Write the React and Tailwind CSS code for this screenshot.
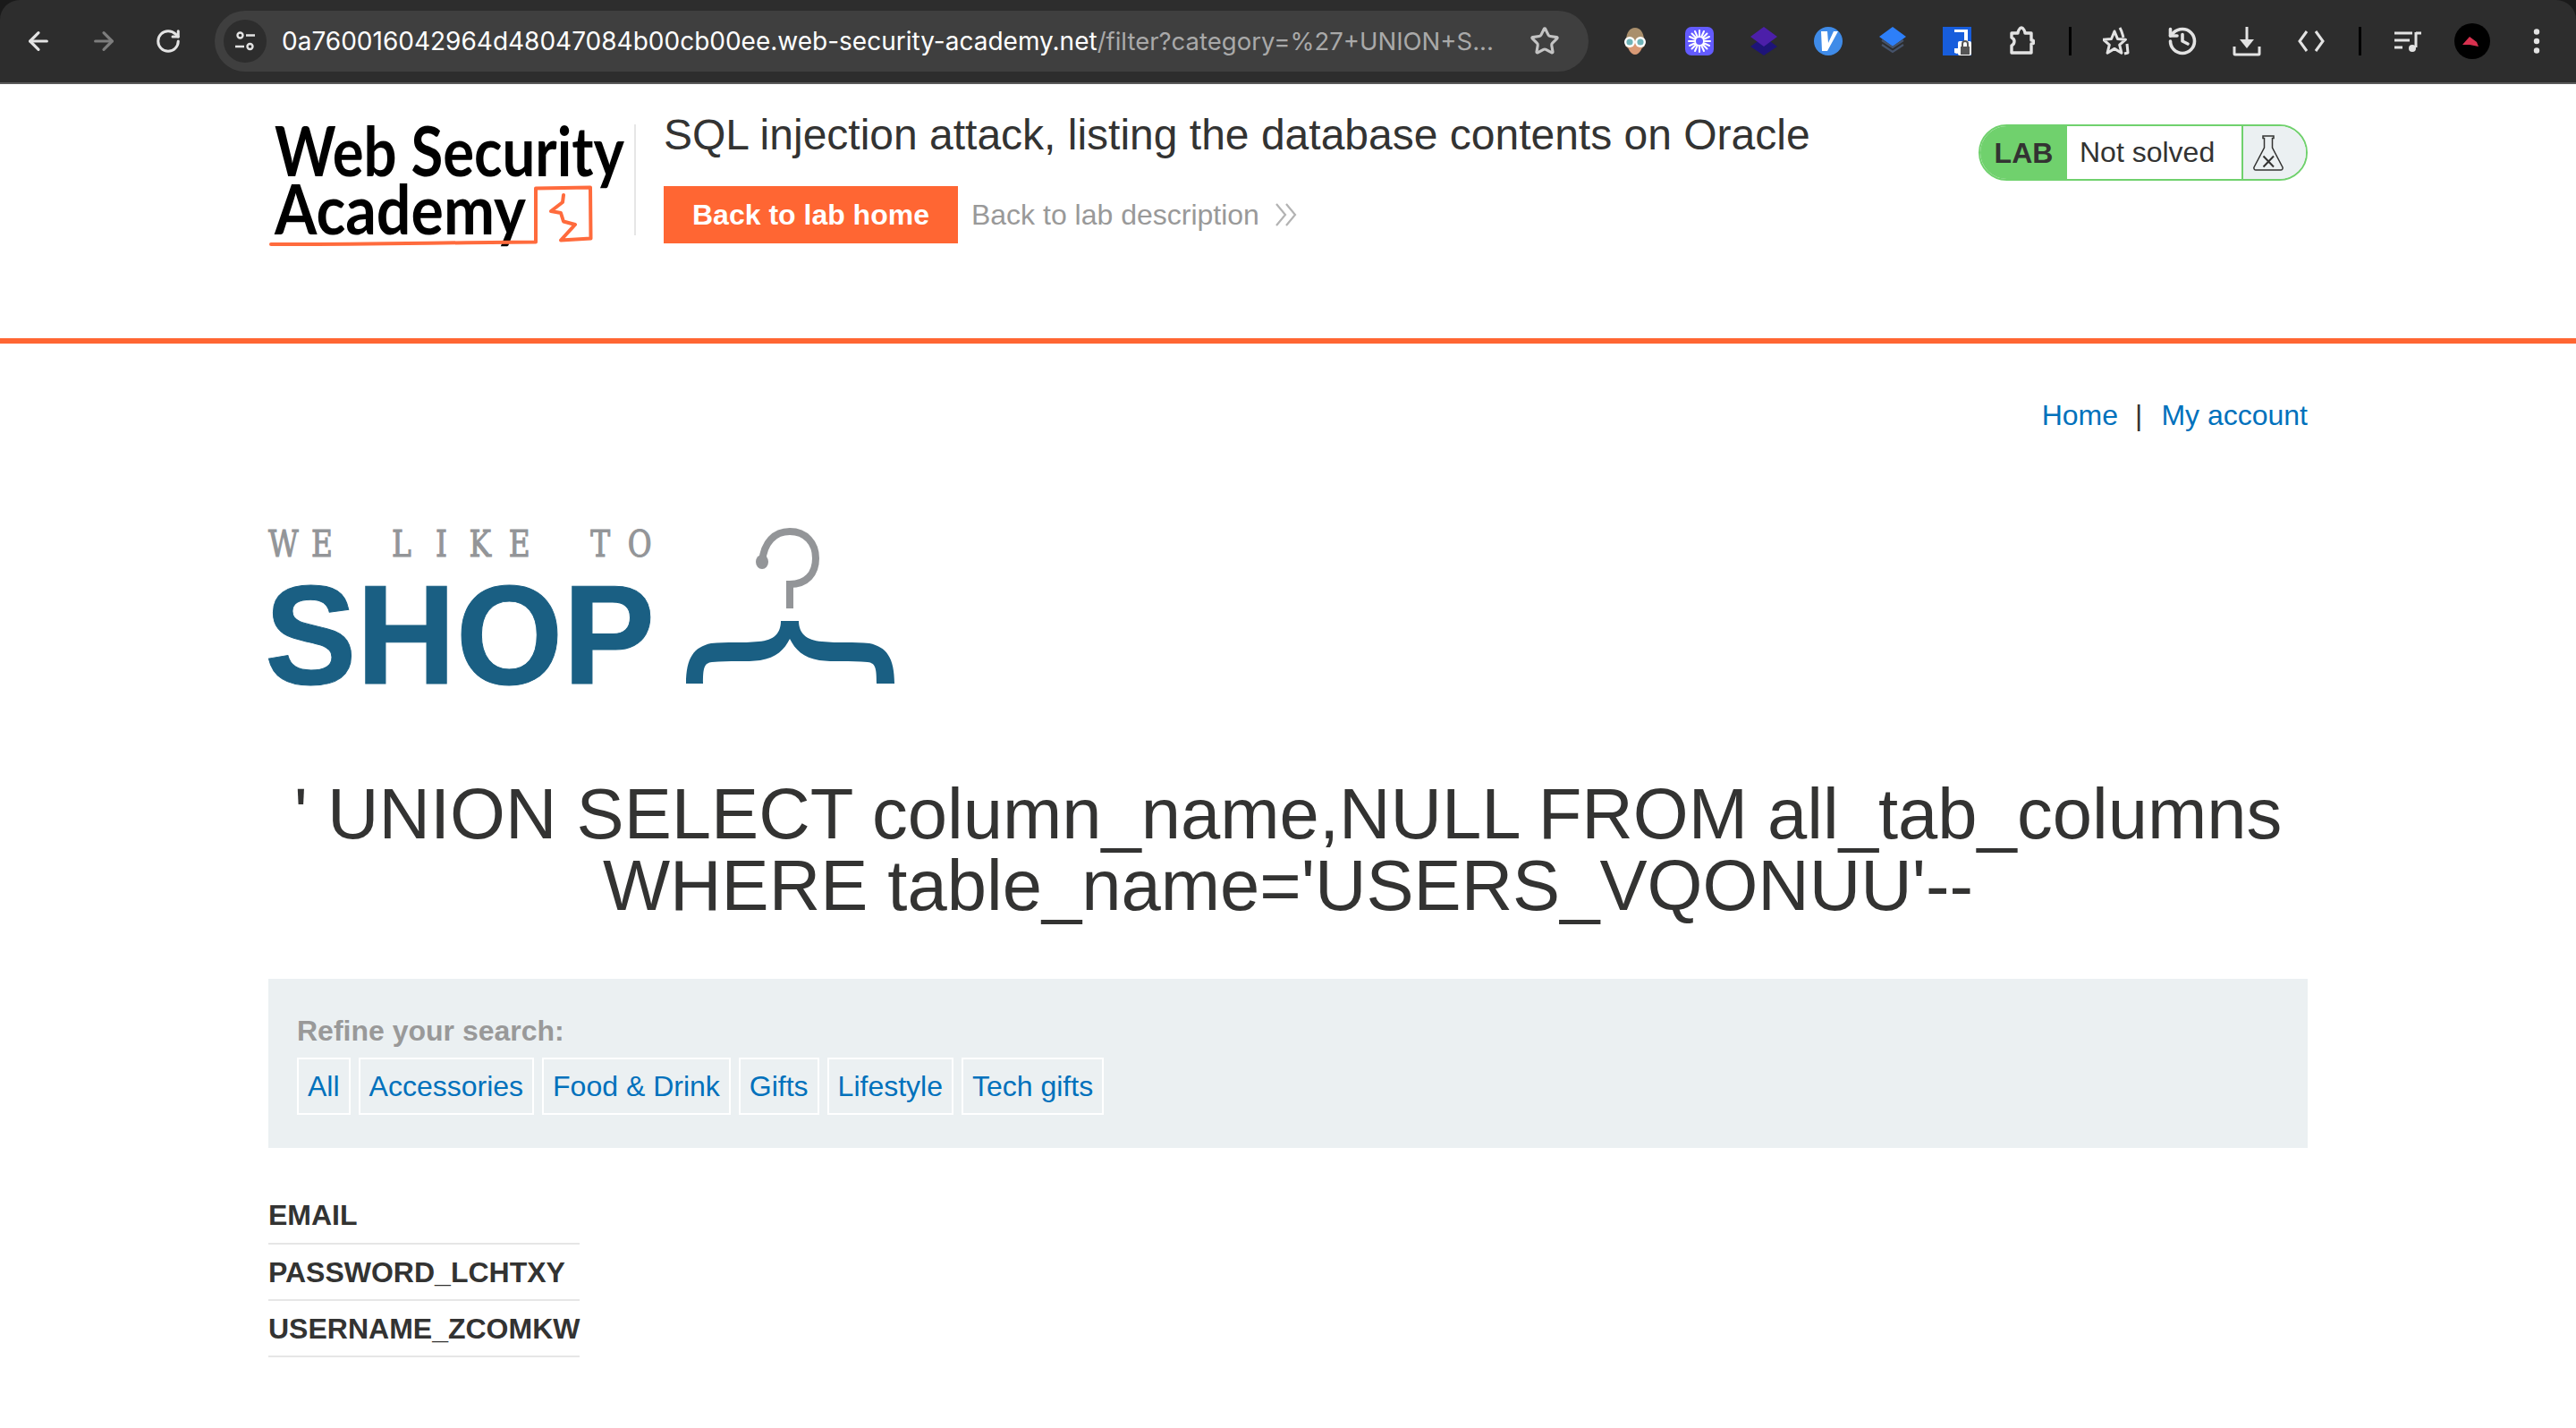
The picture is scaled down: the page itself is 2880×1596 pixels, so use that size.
import React from "react";
import { ArrowLeft, ArrowRight, RotateCw, Star, History } from "lucide-react";

const Slot = ({ children }) => (
  <div className="flex h-[72px] w-[72px] shrink-0 items-center justify-center">{children}</div>
);
const Sep = () => (
  <div className="flex h-[72px] w-[36px] shrink-0 items-center justify-center">
    <div className="h-[32px] w-[3px] bg-black" />
  </div>
);

function Extensions() {
  return (
    <div className="flex items-center">
      <Slot>
        <svg width="32" height="32" viewBox="0 0 32 32">
          <path d="M16 1C10 1 7 6 6 13L5 21l3 3h16l3-3-1-8C25 6 22 1 16 1z" fill="#a98f6c" />
          <path d="M7 16c0 8 4 15 9 15s9-7 9-15z" fill="#d99a76" />
          <circle cx="10" cy="17" r="6" fill="#fff" /><circle cx="22" cy="17" r="6" fill="#fff" />
          <circle cx="10" cy="17" r="3.6" fill="#6fb3b8" /><circle cx="22" cy="17" r="3.6" fill="#6fb3b8" />
        </svg>
      </Slot>
      <Slot>
        <svg width="32" height="32" viewBox="0 0 32 32">
          <rect width="32" height="32" rx="7" fill="#635bff" />
          <g stroke="#fff" strokeWidth="2" strokeLinecap="round">
            <path d="M16 4v24M4 16h24M7.5 7.5l17 17M24.5 7.5l-17 17M11 5l10 22M21 5L11 27M5 11l22 10M27 11L5 21" />
          </g>
          <circle cx="16" cy="16" r="4" fill="#635bff" />
        </svg>
      </Slot>
      <Slot>
        <svg width="32" height="32" viewBox="0 0 32 32">
          <path d="M16 11L31 22 16 32 1 22z" fill="#1e1478" />
          <path d="M16 0L31 11 16 22 1 11z" fill="#4c1fa9" />
        </svg>
      </Slot>
      <Slot>
        <svg width="32" height="32" viewBox="0 0 32 32">
          <circle cx="16" cy="16" r="16" fill="#3f8be8" />
          <path d="M8 5h7l1 13 6-13h5L15 27H9z" fill="#fff" />
        </svg>
      </Slot>
      <Slot>
        <svg width="32" height="32" viewBox="0 0 32 32">
          <path d="M16 0l15 11-15 11L1 11z" fill="#2d7ff9" />
          <path d="M4 16l12 8 12-8M4 21l12 8 12-8" transform="translate(0 -1)" fill="none" stroke="#46536a" strokeWidth="2.2" />
        </svg>
      </Slot>
      <Slot>
        <svg width="32" height="32" viewBox="0 0 32 32">
          <rect width="32" height="32" fill="#175ddc" />
          <path d="M4 3h24v13c0 6-5 11-12 14-1-0-2-1-3-1V3z" fill="#fff" />
          <path d="M13 6h11v10c0 3-2 6-4 8h-7z" fill="#175ddc" />
          <rect x="17" y="16" width="15" height="16" rx="2" fill="#fff" />
          <rect x="20" y="22" width="10" height="9" fill="#555" />
          <path d="M22 22v-3a3 3 0 0 1 6 0v3" fill="none" stroke="#555" strokeWidth="2" />
        </svg>
      </Slot>
      <Slot>
        <svg width="30" height="34" viewBox="0 0 30 34" fill="none" stroke="#e3e3e3" strokeWidth="3.4" strokeLinejoin="round">
          <path d="M4 8h7c0-2 2-6 4-6s4 4 4 6h7v8c2 0 3 1 3 2s-1 2-3 2v10H4V22c2-1 3-3 3-5s-1-3-3-4z" />
        </svg>
      </Slot>
      <Sep />
      <Slot>
        <svg width="34" height="34" viewBox="0 0 34 34" fill="none" stroke="#e3e3e3" strokeWidth="3" strokeLinejoin="round">
          <path d="M13 6l3.5 8.5 9 .7-6.8 6 2.2 9-7.9-4.800-7.900 4.800 2.200-9-6.800-6 9-.7z" />
          <path d="M19 2c3 5 3 8 4 11M27 20l1 10-4 1" />
        </svg>
      </Slot>
      <Slot><History size={36} color="#e3e3e3" strokeWidth={2.4} /></Slot>
      <Slot>
        <svg width="32" height="34" viewBox="0 0 32 34" fill="none">
          <path d="M16 1v18" stroke="#e3e3e3" strokeWidth="3" />
          <path d="M8 15h16l-8 10z" fill="#e3e3e3" />
          <path d="M2 23v8a1 1 0 0 0 1 1h26a1 1 0 0 0 1-1v-8" stroke="#e3e3e3" strokeWidth="3" />
        </svg>
      </Slot>
      <Slot>
        <svg width="30" height="26" viewBox="0 0 30 26" fill="none" stroke="#e3e3e3" strokeWidth="3">
          <path d="M10 2L2 13l8 11M20 2l8 11-8 11" />
        </svg>
      </Slot>
      <Sep />
      <Slot>
        <svg width="30" height="24" viewBox="0 0 30 24" fill="none" stroke="#e3e3e3" strokeWidth="3">
          <path d="M0 3h20M0 11h17M0 19h9M24 2v17M24 3h6" />
          <circle cx="20" cy="20" r="4" fill="#e3e3e3" stroke="none" />
        </svg>
      </Slot>
      <Slot>
        <svg width="40" height="40" viewBox="0 0 40 40">
          <circle cx="20" cy="20" r="20" fill="#000" />
          <path d="M9 24l8-9 8 6 2 5-10-2z" fill="#d8314f" />
        </svg>
      </Slot>
      <Slot>
        <svg width="8" height="28" viewBox="0 0 8 28" fill="#e3e3e3">
          <circle cx="4" cy="3.500" r="3.200" /><circle cx="4" cy="14" r="3.200" /><circle cx="4" cy="24.500" r="3.200" />
        </svg>
      </Slot>
    </div>
  );
}

function Toolbar() {
  return (
    <div className="bg-[#1a1a1a]">
      <div className="flex h-[94px] items-start rounded-t-[22px] border-b-2 border-[#5a5a5a] bg-[#2d2d2d] font-['Inter',sans-serif]">
        <div className="flex h-[92px] w-[240px] shrink-0 items-center pl-[7px]">
          <div className="flex w-[72px] justify-center"><ArrowLeft size={32} color="#e3e3e3" strokeWidth={2.4} /></div>
          <div className="flex w-[74px] justify-center"><ArrowRight size={32} color="#7d7d7d" strokeWidth={2.4} /></div>
          <div className="flex w-[70px] justify-center"><RotateCw size={30} color="#e3e3e3" strokeWidth={2.4} /></div>
        </div>
        <div className="mt-[12px] flex h-[68px] w-[1536px] shrink-0 items-center rounded-full bg-[#3f3f3f] pl-[10px]">
          <div className="flex h-[48px] w-[48px] shrink-0 items-center justify-center rounded-full bg-[#2d2d2d]">
            <svg width="24" height="24" viewBox="0 0 24 24" fill="none" stroke="#e3e3e3" strokeWidth="2.400">
              <circle cx="6.500" cy="5.500" r="3" /><path d="M13 5.500h10M1 18h10" /><circle cx="17.500" cy="18" r="3" />
            </svg>
          </div>
          <div className="ml-[17px] w-[1370px] shrink-0 text-[28px] leading-[36px] whitespace-nowrap text-white">
            0a760016042964d48047084b00cb00ee.web-security-academy.net<span className="text-[27.5px] text-[#a9a9a9]">/filter?category=%27+UNION+S...</span>
          </div>
          <div className="ml-[25px] flex shrink-0 items-center"><Star size={34} color="#c4c4c4" strokeWidth={2.2} /></div>
        </div>
        <div className="ml-[16px] flex h-[92px] items-center"><Extensions /></div>
      </div>
    </div>
  );
}

function AcademyLogo() {
  return (
    <svg width="420" height="150" viewBox="300 130 420 150" className="shrink-0 font-['Lato',sans-serif]">
      <text x="307" y="197" fontSize="76" fontWeight="700" fill="#000" textLength="391" lengthAdjust="spacingAndGlyphs">Web Security</text>
      <text x="307" y="262" fontSize="76" fontWeight="700" fill="#000" textLength="281" lengthAdjust="spacingAndGlyphs">Academy</text>
      <g fill="none" stroke="#ff6b3d" strokeLinejoin="round" strokeLinecap="round">
        <path d="M303 273C400 273.500 500 271 599 270.500V210.500L660 209.500L660.500 266.500L627 268.500L643 251L630 247.500L627 238L616 236L629 226L630 218" strokeWidth="4" />
      </g>
    </svg>
  );
}

function Flask() {
  return (
    <svg width="34" height="42" viewBox="0 0 34 42" fill="none" stroke="#333332" strokeWidth="1.500">
      <path d="M11 2h12v2.500h-1.500V15L33 37c.5 1.500-.5 3-2 3H3c-1.500 0-2.500-1.500-2-3L12.500 15V4.500H11z" />
      <path d="M11.500 24.500L23 36.500M23 24.500L11.500 36.500" strokeWidth="2" />
    </svg>
  );
}

function Header() {
  return (
    <header className="h-[290px] border-b-[6px] border-[#ff6633]">
      <div className="mx-auto flex w-[2280px] items-start pt-[36px]">
        <AcademyLogo />
        <div className="mt-[9px] h-[124px] w-[2px] shrink-0 -translate-x-[11px] bg-[#e6e6e6]" />
        <div className="-ml-[12px] flex flex-1 pl-[32px]">
          <div className="flex-1">
            <h2 className="-mt-[8px] text-[48px] leading-[58px] font-normal text-[#333332]">
              SQL injection attack, listing the database contents on Oracle
            </h2>
            <div className="mt-[28px] flex items-center">
              <a className="flex h-[64px] items-center bg-[#ff6633] px-[32px] text-[32px] font-bold text-white">Back to lab home</a>
              <a className="ml-[15px] flex items-center text-[32px] text-[#999999]">
                Back to lab description
                <svg width="26" height="28" viewBox="0 0 26 28" fill="none" stroke="#b3b3b3" strokeWidth="2.200" className="ml-[17px]">
                  <path d="M2 2l10 12L2 26M13 2l10 12-10 12" />
                </svg>
              </a>
            </div>
          </div>
          <div className="mt-[9px] flex h-[63px] w-[368px] overflow-hidden rounded-full border-2 border-[#70d16d] text-[32px] text-[#333332]">
            <div className="flex w-[97px] items-center justify-center bg-[#70d16d] font-bold">LAB</div>
            <div className="flex flex-1 items-center pb-[1px] pl-[14px]">Not solved</div>
            <div className="flex w-[72px] items-center justify-center border-l-2 border-[#70d16d] bg-[#ebf0f2] pr-[14px]"><Flask /></div>
          </div>
        </div>
      </div>
    </header>
  );
}

function ShopLogo() {
  return (
    <svg width="720" height="190" viewBox="290 585 720 190" className="-ml-[10px] block">
      <g transform="translate(0 621) scale(0.8 1)">
        <text x="396 450 500 561 617 671 726 780 839 894" y="0" textAnchor="middle" fontFamily="'DejaVu Serif',serif" fontSize="41" fill="#939598" stroke="#939598" strokeWidth="1.200">WE LIKE TO</text>
      </g>
      <text x="296" y="763" fontFamily="'Liberation Sans',sans-serif" fontWeight="700" fontSize="157" fill="#1a5f83" stroke="#1a5f83" strokeWidth="1" textLength="436" lengthAdjust="spacingAndGlyphs">SHOP</text>
      <path d="M852 627C854 605 866 593 883 593C901 593 912 606 912 623C912 640 902 652 883 652V679" fill="none" stroke="#939598" strokeWidth="8" />
      <ellipse cx="852" cy="627" rx="7" ry="8" fill="#939598" />
      <path d="M873 693C873 706 866 715 848 716C830 718 812 716 795 718C776 722 767 734 767 763H786C786 746 787 740 796 739C815 737 835 739 850 737C868 734 877 725 883 713C889 725 898 734 916 737C931 739 951 737 970 739C979 740 980 746 980 763H1000C1000 734 991 722 972 718C955 716 937 718 919 716C901 715 893 706 893 693Z" fill="#1a5f83" />
    </svg>
  );
}

export default function App() {
  return (
    <div className="min-h-[1596px] bg-white font-['Liberation_Sans',Arial,sans-serif]">
      <Toolbar />
      <Header />
      <main className="mx-auto w-[2280px]">
        <nav className="mt-[61px] flex h-[38px] items-center justify-end text-[32px] leading-[38px] text-[#333332]">
          <a className="text-[#0071bc]">Home</a>
          <span className="mr-[21px] ml-[19px]">|</span>
          <a className="text-[#0071bc]">My account</a>
        </nav>
        <div className="mt-[103px]"><ShopLogo /></div>
        <h1 className="mt-[94px] text-center text-[79.6px] leading-[80px] font-normal text-[#333332]">
          ' UNION SELECT column_name,NULL FROM all_tab_columns WHERE table_name='USERS_VQONUU'--
        </h1>
        <section className="mt-[64px] h-[189px] bg-[#ebf0f2] px-[32px] pt-[38px]">
          <div className="text-[32px] leading-[40px] font-bold text-[#999999]">Refine your search:</div>
          <div className="mt-[10px] flex gap-[9px] text-[32px]">
            {["All", "Accessories", "Food & Drink", "Gifts", "Lifestyle", "Tech gifts"].map((c) => (
              <a key={c} className="flex h-[64px] items-center border-2 border-white px-[10px] text-[#0071bc]">{c}</a>
            ))}
          </div>
        </section>
        <table className="mt-[44px] border-collapse text-[32px] font-bold text-[#333332]">
          <tbody>
            {["EMAIL", "PASSWORD_LCHTXY", "USERNAME_ZCOMKW"].map((r) => (
              <tr key={r}><td className="h-[63px] border-b-2 border-[#e6e6e6] p-0 align-middle">{r}</td></tr>
            ))}
          </tbody>
        </table>
      </main>
    </div>
  );
}
